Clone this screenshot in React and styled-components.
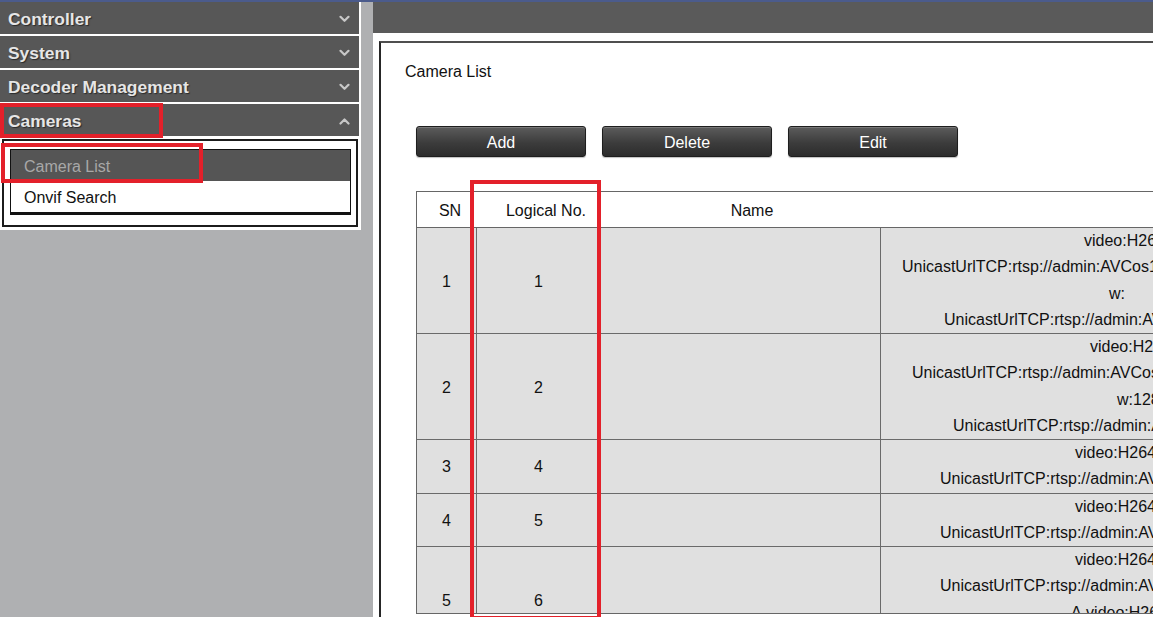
import React from 'react';
import styled, { createGlobalStyle } from 'styled-components';

const GlobalStyle = createGlobalStyle`
  html, body {
    margin: 0;
    padding: 0;
    overflow: hidden;
  }
  body {
    font-family: "Liberation Sans", Arial, sans-serif;
    font-size: 16px;
    color: #111;
    background: #fff;
  }
  * { box-sizing: border-box; }
`;

const Page = styled.div`
  width: 100vw;
  height: 100vh;
  display: flex;
  flex-direction: column;
  border-top: 2px solid #4b5b8c;
  overflow: hidden;
`;

const Main = styled.div`
  flex: 1;
  display: flex;
  min-height: 0;
`;

const Sidebar = styled.div`
  position: relative;
  width: 373px;
  flex-shrink: 0;
  background: #afb0b2;
`;

const Menu = styled.div`
  width: 361px;
  background: #fff;
  padding-right: 2px;
`;

const MenuHeader = styled.div`
  height: 32px;
  margin-bottom: 2px;
  background: #575757;
  display: flex;
  align-items: center;
  justify-content: space-between;
  padding: 2px 9px 0 8px;
  color: #e6e6e6;
  font-weight: bold;
  font-size: 17.4px;
  text-shadow: 1px 1px 1px #2a2a2a;
  &:last-of-type {
    margin-bottom: 0;
  }
`;

const SubPanel = styled.div`
  width: 361px;
  padding: 3px 3px 3px 2px;
  background: #fff;
`;

const OuterBox = styled.div`
  border: 2px solid #1c1c1c;
  padding: 8px 5px 10px 6px;
`;

const InnerBox = styled.div`
  border: 1px solid #111;
  border-bottom-width: 3px;
`;

const SubItem = styled.div`
  height: 31px;
  display: flex;
  align-items: center;
  padding: 2px 0 0 13px;
  font-size: 16px;
  background: ${p => (p.$active ? '#555555' : '#ffffff')};
  color: ${p => (p.$active ? '#a8a8a8' : '#111111')};
`;

const RedMark = styled.div`
  position: absolute;
  border: 4px solid #e3202a;
  pointer-events: none;
  z-index: 5;
`;

const Content = styled.div`
  position: relative;
  flex: 1;
  min-width: 0;
  display: flex;
  flex-direction: column;
  overflow: hidden;
  background: #fff;
`;

const TopBar = styled.div`
  height: 31px;
  flex-shrink: 0;
  background: #5a5a5a;
`;

const Body = styled.div`
  flex: 1;
  padding: 8px 0 0 6px;
  min-height: 0;
`;

const Panel = styled.div`
  width: 1400px;
  height: 100%;
  border-top: 2px solid #4f4f4f;
  border-left: 2px solid #262626;
`;

const Title = styled.div`
  padding: 19px 0 0 24px;
  line-height: 20px;
  font-size: 16px;
`;

const ButtonRow = styled.div`
  display: flex;
  gap: 16px;
  margin: 44px 0 0 35px;
`;

const Button = styled.button`
  width: 170px;
  height: 31px;
  border: 1px solid #1e1e1e;
  border-radius: 3px;
  background: linear-gradient(#5c5c5c, #3c3c3c 55%, #2c2c2c);
  box-shadow: inset 0 1px 0 rgba(255, 255, 255, 0.18), 0 1px 1px rgba(0, 0, 0, 0.25);
  color: #fff;
  font-family: "Liberation Sans", Arial, sans-serif;
  font-size: 16px;
  padding: 3px 0 0;
  cursor: pointer;
`;

const TableWrap = styled.div`
  margin: 34px 0 0 35px;
  height: 423px;
  border: 1px solid #666;
  border-right: none;
  overflow: hidden;
`;

const HeadRow = styled.div`
  display: grid;
  grid-template-columns: 66px 126px 286px 1fr;
  height: 36px;
  background: #fff;
  border-bottom: 1px solid #666;
`;

const HeadCell = styled.div`
  display: flex;
  align-items: center;
  justify-content: center;
  padding-top: 2px;
`;

const Row = styled.div`
  display: grid;
  grid-template-columns: 60px 124px 280px 800px;
  background: #e0e0e0;
  border-bottom: 1px solid #6a6a6a;
`;

const Cell = styled.div`
  display: flex;
  align-items: center;
  justify-content: center;
  padding-top: 2px;
  border-right: 1px solid #6a6a6a;
`;

const DataCell = styled.div`
  white-space: nowrap;
  overflow: hidden;
`;

const Line = styled.div`
  line-height: 26.25px;
  padding-left: ${p => p.$indent}px;
`;

const Chevron = ({ up }) => (
  <svg width="11" height="8" viewBox="0 0 11 8">
    <polyline
      points={up ? '1.5,6.5 5.5,2.5 9.5,6.5' : '1.5,1.8 5.5,5.8 9.5,1.8'}
      fill="none"
      stroke="#c8c8c8"
      strokeWidth="2.2"
      strokeLinecap="round"
      strokeLinejoin="round"
    />
  </svg>
);

const url = 'UnicastUrlTCP:rtsp://admin:AVCos123@192.168.1.64:554/Streaming/Channels/101';

const rows = [
  {
    sn: 1, no: 1,
    lines: [
      ['video:H264 1920x1080 25fps', 203],
      [url, 21],
      ['w:\u00a0\u00a0\u00a0\u00a0\u00a0\u00a0\u00a0\u00a01920 h:1080', 228],
      [url, 63],
    ],
  },
  {
    sn: 2, no: 2,
    lines: [
      ['video:H264 1280x720 25fps', 209],
      [url, 31],
      ['w:1280 h:720', 236],
      [url, 72],
    ],
  },
  { sn: 3, no: 4, lines: [['video:H264 1920x1080', 194], [url, 59]] },
  { sn: 4, no: 5, lines: [['video:H264 1920x1080', 194], [url, 59]] },
  {
    sn: 5, no: 6,
    lines: [
      ['video:H264 1920x1080', 194],
      [url, 59],
      ['A.video:H264 1280x720', 190],
      [url, 59],
    ],
  },
];

const menus = ['Controller', 'System', 'Decoder Management'];

export default function App() {
  return (
    <>
      <GlobalStyle />
      <Page>
        <Main>
          <Sidebar>
            <Menu>
              {menus.map(m => (
                <MenuHeader key={m}>
                  <span>{m}</span>
                  <Chevron />
                </MenuHeader>
              ))}
              <MenuHeader>
                <span>Cameras</span>
                <Chevron up />
              </MenuHeader>
            </Menu>
            <SubPanel>
              <OuterBox>
                <InnerBox>
                  <SubItem $active>Camera List</SubItem>
                  <SubItem>Onvif Search</SubItem>
                </InnerBox>
              </OuterBox>
            </SubPanel>
            <RedMark style={{ left: 0, top: 101, width: 163, height: 35 }} />
            <RedMark style={{ left: 1, top: 141, width: 202, height: 40 }} />
          </Sidebar>

          <Content>
            <TopBar />
            <Body>
              <Panel>
                <Title>Camera List</Title>
                <ButtonRow>
                  <Button>Add</Button>
                  <Button>Delete</Button>
                  <Button>Edit</Button>
                </ButtonRow>
                <TableWrap>
                  <HeadRow>
                    <HeadCell>SN</HeadCell>
                    <HeadCell>Logical No.</HeadCell>
                    <HeadCell>Name</HeadCell>
                    <HeadCell />
                  </HeadRow>
                  {rows.map(r => (
                    <Row key={r.sn}>
                      <Cell>{r.sn}</Cell>
                      <Cell>{r.no}</Cell>
                      <Cell />
                      <DataCell>
                        {r.lines.map(([t, i], k) => (
                          <Line key={k} $indent={i}>{t}</Line>
                        ))}
                      </DataCell>
                    </Row>
                  ))}
                </TableWrap>
              </Panel>
            </Body>
            <RedMark style={{ left: 97, top: 178, width: 131, height: 440 }} />
          </Content>
        </Main>
      </Page>
    </>
  );
}
